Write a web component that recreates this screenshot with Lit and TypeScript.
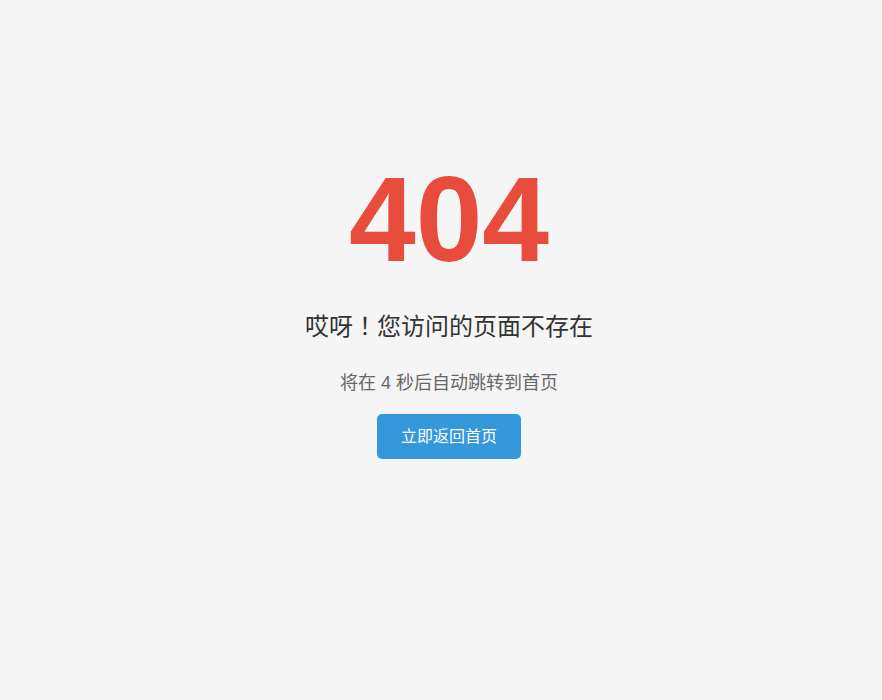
import { LitElement, html, css } from "lit";
import { customElement, property } from "lit/decorators.js";

@customElement("app-root")
export class AppRoot extends LitElement {
  @property({ type: Number }) seconds = 4;

  static styles = css`
    :host {
      display: block;
      box-sizing: border-box;
      min-height: 100vh;
      padding: 159px 0 40px 16px;
      background: #f5f5f5;
      color: #333;
      font-family: "Liberation Sans", "Noto Sans CJK SC", sans-serif;
      text-align: center;
    }
    .code {
      margin: 0 0 30px;
      font-size: 120px;
      line-height: 120px;
      font-weight: bold;
      color: #e74c3c;
    }
    .message {
      margin: 0 0 28px;
      font-size: 24px;
      line-height: 32px;
      font-weight: normal;
    }
    /* full-width mark sits in the middle of its cell */
    .mark {
      font-family: "Noto Sans CJK TC", sans-serif;
    }
    .countdown {
      margin: 0 0 19px;
      font-size: 18px;
      line-height: 24px;
      color: #666;
    }
    .home {
      display: inline-block;
      padding: 12px 24px;
      border-radius: 5px;
      background: #3498db;
      color: #fff;
      font-size: 16px;
      line-height: 21px;
      text-decoration: none;
    }
    .home:hover {
      background: #2980b9;
    }
  `;

  render() {
    return html`
      <main>
        <h1 class="code">404</h1>
        <h2 class="message">哎呀<span class="mark" lang="zh-TW">！</span>您访问的页面不存在</h2>
        <p class="countdown">将在 ${this.seconds} 秒后自动跳转到首页</p>
        <a class="home" href="/">立即返回首页</a>
      </main>
    `;
  }
}

declare global {
  interface HTMLElementTagNameMap {
    "app-root": AppRoot;
  }
}
